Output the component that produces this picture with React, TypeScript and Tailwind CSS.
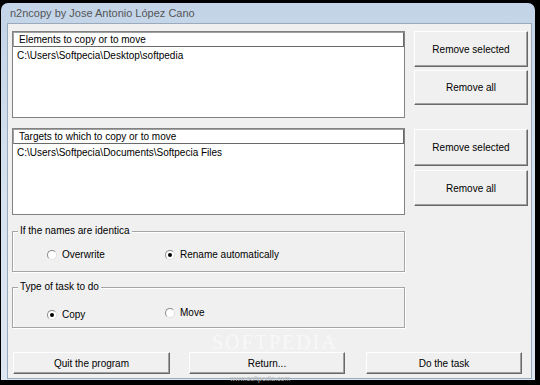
import React from "react";

const font = { fontFamily: '"Liberation Sans", Arial, sans-serif' };

function Btn ( { label, className }: { label: string; className: string } )
{
  return (
    <div
      className={ `flex items-center justify-center bg-[#f0f0f0] border border-t-white border-l-white border-r-[#696969] border-b-[#696969] shadow-[inset_-1px_-1px_0_#a0a0a0] text-[10px] text-black ${ className }` }
    >
      { label }
    </div>
  );
}

function ListBox ( { header, item }: { header: string; item: string } )
{
  return (
    <div className="w-[393px] h-[87px] bg-white border border-[#828282] flex flex-col">
      <div className="h-[15px] flex items-center pl-[5px] bg-white border border-t-[#a0a0a0] border-l-[#a0a0a0] border-r-[#696969] border-b-[#696969] text-[10px] text-black">
        { header }
      </div>
      <div className="pl-[4px] pt-[3px] text-[10px] text-black leading-[12px]">{ item }</div>
    </div>
  );
}

function Radio ( { checked, label }: { checked?: boolean; label: string } )
{
  return (
    <div className="flex items-center gap-[5px] text-[10px] text-black">
      <div className="w-[10px] h-[10px] rounded-full bg-white border border-t-[#8a8a8a] border-l-[#8a8a8a] border-r-[#e0e0e0] border-b-[#e0e0e0] flex items-center justify-center">
        { checked && <div className="w-[4px] h-[4px] rounded-full bg-black" /> }
      </div>
      <span>{ label }</span>
    </div>
  );
}

function Group ( { title, children, className }: { title: string; children: React.ReactNode; className: string } )
{
  return (
    <div className={ `relative w-[393px] h-[41px] border border-[#a5a5a5] shadow-[inset_1px_1px_0_#fff,1px_1px_0_#fff] ${ className }` }>
      <span className="absolute -top-[7px] left-[5px] bg-[#f0f0f0] px-[2px] text-[10px] leading-[12px] text-black">{ title }</span>
      { children }
    </div>
  );
}

export default function App ()
{
  return (
    <div className="w-[540px] h-[385px] bg-black overflow-hidden relative" style={ font }>
      <div className="ml-[1px] mt-[3px] w-[534px] h-[377px] rounded-t-[7px] bg-gradient-to-b from-[#c3d4e8] via-[#d6e2ef] to-[#dde7f2] flex flex-col">
        {/* Title bar */ }
        <div className="h-[20px] flex items-center pl-[9px] text-[11px] text-[#555]">
          n2ncopy by Jose Antonio López Cano
        </div>

        {/* Client area */ }
        <div className="ml-[6px] w-[525px] h-[356px] border border-[#9aa9bb] bg-[#f0f0f0] pl-[4px] pt-[7px]">
          {/* Elements */ }
          <div className="flex gap-[9px]">
            <ListBox header="Elements to copy or to move" item="C:\Users\Softpecia\Desktop\softpedia" />
            <div className="flex flex-col gap-[3px]">
              <Btn label="Remove selected" className="w-[114px] h-[36px]" />
              <Btn label="Remove all" className="w-[114px] h-[35px]" />
            </div>
          </div>

          {/* Targets */ }
          <div className="flex gap-[9px] mt-[10px]">
            <ListBox header="Targets to which to copy or to move" item="C:\Users\Softpecia\Documents\Softpecia Files" />
            <div className="flex flex-col gap-[4px] mt-[1px]">
              <Btn label="Remove selected" className="w-[114px] h-[37px]" />
              <Btn label="Remove all" className="w-[114px] h-[36px]" />
            </div>
          </div>

          <Group title="If the names are identica" className="mt-[16px]">
            <div className="flex pt-[15px] pl-[34px]">
              <div className="w-[118px]"><Radio label="Overwrite" /></div>
              <Radio checked label="Rename automatically" />
            </div>
          </Group>

          <Group title="Type of task to do" className="mt-[15px]">
            <div className="flex items-start pl-[34px]">
              <div className="w-[118px] pt-[19px]"><Radio checked label="Copy" /></div>
              <div className="pt-[17px]"><Radio label="Move" /></div>
            </div>
          </Group>

          <div className="flex mt-[24px] ml-[1px]">
            <Btn label="Quit the program" className="w-[157px] h-[22px]" />
            <Btn label="Return..." className="w-[156px] h-[22px] ml-[19px]" />
            <Btn label="Do the task" className="w-[156px] h-[22px] ml-[21px]" />
          </div>
        </div>
      </div>

      {/* Watermark */ }
      <span
        className="absolute left-[212px] top-[332px] text-[20px] leading-[20px] tracking-[2px] text-white/60 pointer-events-none select-none"
        style={ { fontFamily: '"Liberation Serif", serif' } }
      >
        SOFTPEDIA
      </span>
      <span className="absolute left-[230px] top-[375px] text-[7px] leading-[8px] text-[#b8b8b8] pointer-events-none select-none">
        www.softpedia.com
      </span>
    </div>
  );
}
